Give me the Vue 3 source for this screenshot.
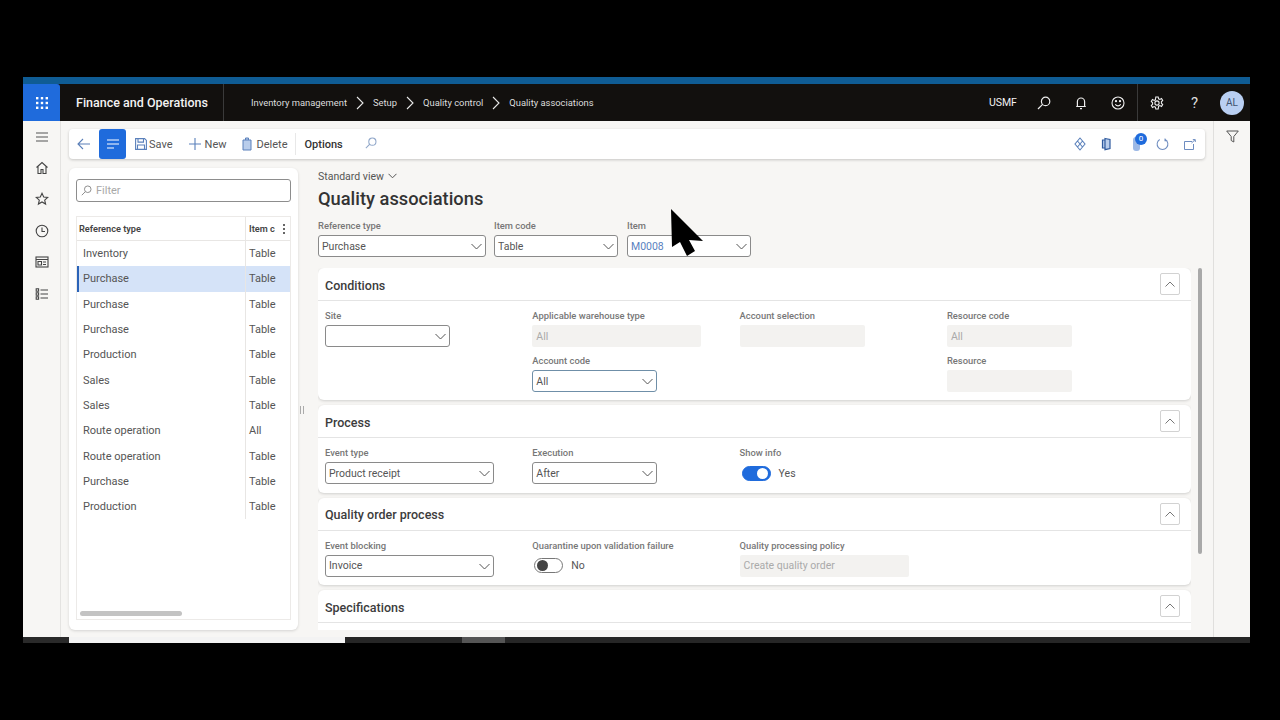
<script setup>
const crumbs = ['Inventory management', 'Setup', 'Quality control', 'Quality associations']

const rows = [
  { type: 'Inventory', code: 'Table' },
  { type: 'Purchase', code: 'Table', selected: true },
  { type: 'Purchase', code: 'Table' },
  { type: 'Purchase', code: 'Table' },
  { type: 'Production', code: 'Table' },
  { type: 'Sales', code: 'Table' },
  { type: 'Sales', code: 'Table' },
  { type: 'Route operation', code: 'All' },
  { type: 'Route operation', code: 'Table' },
  { type: 'Purchase', code: 'Table' },
  { type: 'Production', code: 'Table' }
]
</script>

<template>
  <div class="page">
    <div class="frame">
      <div class="top-strip"></div>

      <header class="navbar">
        <div class="waffle">
          <svg width="14" height="14" viewBox="0 0 14 14" fill="#fff">
            <rect x="1" y="1" width="2.4" height="2.4" /><rect x="5.8" y="1" width="2.4" height="2.4" /><rect x="10.6" y="1" width="2.4" height="2.4" />
            <rect x="1" y="5.8" width="2.4" height="2.4" /><rect x="5.8" y="5.8" width="2.4" height="2.4" /><rect x="10.6" y="5.8" width="2.4" height="2.4" />
            <rect x="1" y="10.6" width="2.4" height="2.4" /><rect x="5.8" y="10.6" width="2.4" height="2.4" /><rect x="10.6" y="10.6" width="2.4" height="2.4" />
          </svg>
        </div>
        <div class="brand">Finance and Operations</div>
        <nav class="crumbs">
          <template v-for="(c, i) in crumbs" :key="c">
            <span>{{ c }}</span>
            <svg v-if="i < crumbs.length - 1" class="crumb-sep" width="8" height="14" viewBox="0 0 8 14" fill="none" stroke="#e8e8e8" stroke-width="1.1">
              <path d="M1 1l6 6-6 6" />
            </svg>
          </template>
        </nav>
        <div class="nav-right">
          <span class="company">USMF</span>
          <svg class="nav-icon" width="14" height="14" viewBox="0 0 14 14" fill="none" stroke="#eee" stroke-width="1.2"><circle cx="8.6" cy="5.4" r="4.2" /><path d="M5.6 8.4L1 13" /></svg>
          <svg class="nav-icon" width="14" height="14" viewBox="0 0 14 14" fill="none" stroke="#eee" stroke-width="1.2"><path d="M3.4 10.5V5.6a3.6 3.6 0 0 1 7.2 0v4.900zM2.2 10.5h9.6M6 12.6h2" /></svg>
          <svg class="nav-icon smile" width="14" height="14" viewBox="0 0 14 14" fill="none" stroke="#eee" stroke-width="1.1"><circle cx="7" cy="7" r="6" /><path d="M4.3 8.2c.7 1.2 1.6 1.7 2.7 1.7s2-.5 2.700-1.700" /><circle cx="5" cy="5.2" r=".6" fill="#eee" /><circle cx="9" cy="5.2" r=".6" fill="#eee" /></svg>
          <span class="nav-divider"></span>
          <svg class="nav-icon gear" width="14" height="14" viewBox="0 0 14 14" fill="none" stroke="#eee" stroke-width="1.1"><path d="M5.8 1h2.4l.4 1.8 1.3.6 1.6-.9 1.2 2-1.3 1.3v1.4l1.3 1.3-1.2 2-1.6-.9-1.3.6L8.2 13H5.8l-.4-1.8-1.3-.6-1.6.9-1.2-2 1.3-1.3V6.800L1.300 5.500l1.200-2 1.600.900 1.300-.600z" /><circle cx="7" cy="7" r="2.1" /></svg>
          <span class="help">?</span>
          <span class="avatar">AL</span>
        </div>
      </header>

      <div class="body">
        <aside class="rail">
          <svg width="14" height="12" viewBox="0 0 14 12" stroke="#555" stroke-width="1.1"><path d="M1 2h12M1 6h12M1 10h12" /></svg>
          <svg width="14" height="14" viewBox="0 0 14 14" fill="none" stroke="#444" stroke-width="1.1"><path d="M1.5 6.5L7 1.5l5.500 5M3 5.500V12.500h3V8.500h2V12.500h3V5.500" /></svg>
          <svg width="14" height="14" viewBox="0 0 14 14" fill="none" stroke="#444" stroke-width="1.1"><path d="M7 1.3l1.700 3.700 4 .4-3 2.700.9 4L7 10l-3.600 2.100.9-4-3-2.700 4-.4z" /></svg>
          <svg width="14" height="14" viewBox="0 0 14 14" fill="none" stroke="#444" stroke-width="1.1"><circle cx="7" cy="7" r="5.8" /><path d="M7 3.5V7.500H10" /></svg>
          <svg width="14" height="14" viewBox="0 0 14 14" fill="none" stroke="#444" stroke-width="1.1"><rect x="1" y="2" width="12" height="10" /><path d="M1 4.500h12M3 6.500h3.500v3.500H3zM8 7h3M8 9.500h3" /></svg>
          <svg width="14" height="14" viewBox="0 0 14 14" fill="none" stroke="#444" stroke-width="1.1"><rect x="1.2" y="1.8" width="2.4" height="2.4" /><rect x="1.2" y="5.8" width="2.4" height="2.4" /><rect x="1.2" y="9.8" width="2.4" height="2.4" /><path d="M5.500 3h7.500M5.500 7h7.500M5.500 11h7.500" /></svg>
        </aside>

        <main class="main">
          <div class="actionbar">
            <svg class="back" width="14" height="12" viewBox="0 0 14 12" fill="none" stroke="#5b7fb8" stroke-width="1.1"><path d="M6 1L1 6l5 5M1 6h12" /></svg>
            <span class="menu-btn">
              <svg width="12" height="10" viewBox="0 0 12 10" stroke="#fff" stroke-width="1.2"><path d="M0 1h12M0 5h12M0 9h7" /></svg>
            </span>
            <span class="action action-first">
              <svg width="12" height="12" viewBox="0 0 12 12" fill="none" stroke="#5a80bb" stroke-width="1.1"><path d="M.6.6h9l1.800 1.800v9H.6zM3 .6v3.500h5.500V.6M2.500 11.400V7h7v4.400" /></svg>
              Save
            </span>
            <span class="action">
              <svg width="12" height="12" viewBox="0 0 12 12" stroke="#5a80bb" stroke-width="1.1"><path d="M6 0v12M0 6h12" /></svg>
              New
            </span>
            <span class="action action-last">
              <svg width="10" height="14" viewBox="0 0 10 14" fill="#b9cdeb" stroke="#5a80bb" stroke-width="1"><path d="M1 3h8v10H1zM3.500 3V1h3v2" /></svg>
              Delete
            </span>
            <span class="options">Options</span>
            <svg class="action-search" width="12" height="12" viewBox="0 0 14 14" fill="none" stroke="#8fa6c9" stroke-width="1.2"><circle cx="8.6" cy="5.4" r="4.2" /><path d="M5.6 8.4L1 13" /></svg>

            <div class="action-right">
              <svg width="12" height="14" viewBox="0 0 12 14" fill="none" stroke="#5a80bb" stroke-width="1.1"><path d="M6 1l5 6-5 6-5-6zM3.500 4l5 6M8.500 4l-5 6" /></svg>
              <svg width="10" height="14" viewBox="0 0 10 14" fill="#b9cdeb" stroke="#2f5a9e" stroke-width="1.2"><path d="M4 1.500l5 1v9l-5 1.200zM4 3H1.500v8H4" /></svg>
              <span class="attach">
                <svg width="8" height="14" viewBox="0 0 8 14" fill="#9db9e6"><rect x="0" y="0" width="7" height="14" rx="3" /></svg>
                <span class="badge">0</span>
              </span>
              <svg width="13" height="14" viewBox="0 0 14 14" fill="none" stroke="#6d8cc0" stroke-width="1.1"><path d="M4 2.200a5.800 5.800 0 1 0 6 0M9.700 1v2.600h2.500" /></svg>
              <svg width="12" height="11" viewBox="0 0 12 11" fill="none" stroke="#6d8cc0" stroke-width="1"><path d="M8 2.500H.5v8h9V5M7.500 4L11 .8M8.800.6H11.300V3" /></svg>
            </div>
          </div>

          <div class="workspace">
            <section class="list-panel">
              <div class="filter">
                <svg width="11" height="11" viewBox="0 0 14 14" fill="none" stroke="#888" stroke-width="1.2"><circle cx="8.6" cy="5.4" r="4.2" /><path d="M5.6 8.4L1 13" /></svg>
                <span>Filter</span>
              </div>
              <div class="grid">
                <div class="grid-head">
                  <span class="col-type">Reference type</span>
                  <span class="col-code">Item c<span class="cut">c</span></span>
                  <span class="kebab">
                    <i></i><i></i><i></i>
                  </span>
                </div>
                <div v-for="(r, i) in rows" :key="i" class="grid-row" :class="{ selected: r.selected }">
                  <span class="col-type">{{ r.type }}</span>
                  <span class="col-code">{{ r.code }}</span>
                </div>
                <div class="grid-scroll"></div>
              </div>
            </section>

            <span class="splitter"></span>

            <section class="form">
              <div class="view-name">
                Standard view
                <svg width="9" height="6" viewBox="0 0 9 6" fill="none" stroke="#555" stroke-width="1"><path d="M.5.8l4 4 4-4" /></svg>
              </div>
              <h1>Quality associations</h1>

              <div class="head-fields">
                <div class="field">
                  <label>Reference type</label>
                  <div class="select w168">Purchase<svg class="chev" width="11" height="7" viewBox="0 0 11 7" fill="none" stroke="#555" stroke-width="1"><path d="M.5 1l5 5 5-5" /></svg></div>
                </div>
                <div class="field">
                  <label>Item code</label>
                  <div class="select w124">Table<svg class="chev" width="11" height="7" viewBox="0 0 11 7" fill="none" stroke="#555" stroke-width="1"><path d="M.5 1l5 5 5-5" /></svg></div>
                </div>
                <div class="field item-field">
                  <label>Item</label>
                  <div class="select w124 link">M0008<svg class="chev" width="11" height="7" viewBox="0 0 11 7" fill="none" stroke="#555" stroke-width="1"><path d="M.5 1l5 5 5-5" /></svg></div>
                </div>
              </div>

              <div class="cards-wrap">
                <div class="cards">
                  <article class="card conditions">
                    <div class="card-head">
                      <h2>Conditions</h2>
                      <span class="collapse"><svg width="10" height="6" viewBox="0 0 10 6" fill="none" stroke="#777" stroke-width="1"><path d="M.5 5.500L5 1l4.500 4.500" /></svg></span>
                    </div>
                    <div class="card-body cond-body">
                      <div class="field">
                        <label>Site</label>
                        <div class="select w125"><svg class="chev" width="11" height="7" viewBox="0 0 11 7" fill="none" stroke="#555" stroke-width="1"><path d="M.5 1l5 5 5-5" /></svg></div>
                      </div>
                      <div class="field-stack">
                        <div class="field">
                          <label>Applicable warehouse type</label>
                          <div class="readonly w169">All</div>
                        </div>
                        <div class="field">
                          <label>Account code</label>
                          <div class="select w125 focused">All<svg class="chev" width="11" height="7" viewBox="0 0 11 7" fill="none" stroke="#555" stroke-width="1"><path d="M.5 1l5 5 5-5" /></svg></div>
                        </div>
                      </div>
                      <div class="field">
                        <label>Account selection</label>
                        <div class="readonly w125"></div>
                      </div>
                      <div class="field-stack">
                        <div class="field">
                          <label>Resource code</label>
                          <div class="readonly w125">All</div>
                        </div>
                        <div class="field">
                          <label>Resource</label>
                          <div class="readonly w125"></div>
                        </div>
                      </div>
                    </div>
                  </article>

                  <article class="card">
                    <div class="card-head">
                      <h2>Process</h2>
                      <span class="collapse"><svg width="10" height="6" viewBox="0 0 10 6" fill="none" stroke="#777" stroke-width="1"><path d="M.5 5.500L5 1l4.500 4.500" /></svg></span>
                    </div>
                    <div class="card-body">
                      <div class="field">
                        <label>Event type</label>
                        <div class="select w169">Product receipt<svg class="chev" width="11" height="7" viewBox="0 0 11 7" fill="none" stroke="#555" stroke-width="1"><path d="M.5 1l5 5 5-5" /></svg></div>
                      </div>
                      <div class="field">
                        <label>Execution</label>
                        <div class="select w125">After<svg class="chev" width="11" height="7" viewBox="0 0 11 7" fill="none" stroke="#555" stroke-width="1"><path d="M.5 1l5 5 5-5" /></svg></div>
                      </div>
                      <div class="field">
                        <label>Show info</label>
                        <div class="toggle-row"><span class="toggle on"><i></i></span>Yes</div>
                      </div>
                    </div>
                  </article>

                  <article class="card">
                    <div class="card-head">
                      <h2>Quality order process</h2>
                      <span class="collapse"><svg width="10" height="6" viewBox="0 0 10 6" fill="none" stroke="#777" stroke-width="1"><path d="M.5 5.500L5 1l4.500 4.500" /></svg></span>
                    </div>
                    <div class="card-body">
                      <div class="field">
                        <label>Event blocking</label>
                        <div class="select w169">Invoice<svg class="chev" width="11" height="7" viewBox="0 0 11 7" fill="none" stroke="#555" stroke-width="1"><path d="M.5 1l5 5 5-5" /></svg></div>
                      </div>
                      <div class="field">
                        <label>Quarantine upon validation failure</label>
                        <div class="toggle-row"><span class="toggle"><i></i></span>No</div>
                      </div>
                      <div class="field">
                        <label>Quality processing policy</label>
                        <div class="readonly w169">Create quality order</div>
                      </div>
                    </div>
                  </article>

                  <article class="card">
                    <div class="card-head">
                      <h2>Specifications</h2>
                      <span class="collapse"><svg width="10" height="6" viewBox="0 0 10 6" fill="none" stroke="#777" stroke-width="1"><path d="M.5 5.500L5 1l4.500 4.500" /></svg></span>
                    </div>
                    <div class="card-body"></div>
                  </article>
                </div>
                <div class="scrollbar"></div>
              </div>
            </section>
          </div>
        </main>

        <aside class="filter-rail">
          <svg width="13" height="13" viewBox="0 0 13 13" fill="none" stroke="#555" stroke-width="1"><path d="M.7 1h11.600L7.800 6.500V12L5.200 10.500V6.500z" /></svg>
        </aside>
      </div>

      <div class="taskbar">
        <span class="task-dark"></span>
        <span class="task-light"></span>
        <span class="task-rest"><i></i></span>
      </div>

      <svg class="cursor" width="34" height="48" viewBox="0 0 34 48"><path d="M1 0L33 32 19 31 25 42 17 47 10 33 2 38z" fill="#000" /></svg>
    </div>
  </div>
</template>

<style scoped>
.page {
  width: 1280px;
  height: 720px;
  background: #000;
  padding: 77px 30px 0 23px;
  box-sizing: border-box;
  overflow: hidden;
  font-family: Roboto, "Liberation Sans", sans-serif;
  color: #333;
}

.frame {
  position: relative;
  height: 566px;
  display: flex;
  flex-direction: column;
  background: #f7f6f4;
}

.top-strip {
  height: 7px;
  background: #0f5c94;
}

.navbar {
  height: 37px;
  display: flex;
  align-items: center;
  background: #12100e;
  color: #f2f2f2;
}

.waffle {
  width: 37px;
  height: 37px;
  background: #1f6bdc;
  display: flex;
  align-items: center;
  justify-content: center;
  border-top-right-radius: 3px;
}

.brand {
  width: 147px;
  height: 37px;
  line-height: 37px;
  padding-left: 16px;
  border-right: 1px solid #3a3a3a;
  font-size: 12.5px;
  font-weight: 500;
  white-space: nowrap;
}

.crumbs {
  display: flex;
  align-items: center;
  gap: 8px;
  margin-left: 27px;
  font-size: 9.4px;
  color: #ddd;
}

.crumb-sep {
  margin: 0 1px;
}

.nav-right {
  margin-left: auto;
  height: 37px;
  display: flex;
  align-items: center;
}

.company {
  font-size: 10.5px;
  margin-right: 20px;
}

.nav-icon {
  margin-right: 23px;
}

.nav-icon.smile {
  margin-right: 12px;
}

.nav-icon.gear {
  margin-right: 28px;
}

.nav-divider {
  width: 1px;
  height: 37px;
  background: #3a3a3a;
  margin-right: 12px;
}

.help {
  font-size: 15px;
  margin-left: -1px;
  margin-right: 22px;
  color: #ddd;
}

.avatar {
  width: 24px;
  height: 24px;
  margin-right: 6px;
  border-radius: 50%;
  background: #b9cff2;
  color: #40526e;
  font-size: 10px;
  text-align: center;
  line-height: 24px;
}

.body {
  flex: 1;
  display: flex;
  min-height: 0;
}

.rail {
  width: 37px;
  margin-right: 8px;
  padding-top: 10px;
  display: flex;
  flex-direction: column;
  align-items: center;
  gap: 17.6px;
  border-right: 1px solid #e4e3e1;
}

.main {
  flex: 1;
  min-width: 0;
  padding: 8px 8px 7px 0;
  display: flex;
  flex-direction: column;
}

.actionbar {
  height: 30px;
  flex: none;
  display: flex;
  align-items: center;
  background: #fff;
  border-radius: 4px;
  box-shadow: 0 1px 3px rgba(0, 0, 0, 0.2);
  font-size: 11px;
  color: #555;
}

.back {
  margin-left: 8px;
}

.menu-btn {
  width: 27px;
  height: 30px;
  margin-left: 8px;
  background: #1f6bdc;
  border-radius: 3px;
  display: flex;
  align-items: center;
  justify-content: center;
}

.action {
  display: flex;
  align-items: center;
  gap: 4px;
  margin-left: 16px;
}

.action-first {
  margin-left: 9px;
  gap: 2px;
}

.action-last {
  padding-right: 8px;
  height: 22px;
  border-right: 1px solid #e8e8e8;
}

.options {
  margin-left: 8px;
  font-weight: 500;
  color: #333;
}

.action-search {
  margin-left: 22px;
  margin-top: -2px;
}

.action-right {
  margin-left: auto;
  display: flex;
  align-items: center;
  gap: 15px;
  padding-right: 9px;
}

.attach {
  position: relative;
  display: flex;
  margin-left: 7px;
}

.badge {
  position: absolute;
  left: 2px;
  top: -4px;
  width: 12px;
  height: 12px;
  border-radius: 50%;
  background: #1f6bdc;
  color: #fff;
  font-size: 8px;
  line-height: 12px;
  text-align: center;
}

.workspace {
  flex: 1;
  min-height: 0;
  display: flex;
  margin-top: 9px;
}

.list-panel {
  width: 229px;
  flex: none;
  box-sizing: border-box;
  padding: 11px 7px 10px 7px;
  background: #fff;
  border-radius: 6px;
  box-shadow: 0 1px 3px rgba(0, 0, 0, 0.14);
  display: flex;
  flex-direction: column;
}

.filter {
  height: 23px;
  flex: none;
  box-sizing: border-box;
  border: 1px solid #8d8d8d;
  border-radius: 3px;
  display: flex;
  align-items: center;
  gap: 4px;
  padding-left: 4px;
  font-size: 11px;
  color: #a8a8a8;
}

.grid {
  position: relative;
  flex: 1;
  margin-top: 14px;
  width: 215px;
  border: 1px solid #eceae8;
  box-sizing: border-box;
}

.grid-head {
  height: 23px;
  display: flex;
  align-items: center;
  position: relative;
  font-size: 9.2px;
  font-weight: 600;
  color: #444;
  border-bottom: 1px solid #e8e6e4;
}

.grid-head .col-type {
  padding-left: 2px;
}

.grid-head .col-code {
  padding-left: 3px;
  flex: none;
  width: 26px;
  overflow: hidden;
  white-space: nowrap;
}

.cut {
  opacity: 0.4;
}

.col-type {
  width: 168px;
  flex: none;
  box-sizing: border-box;
  padding-left: 6px;
}

.col-code {
  flex: 1;
  height: 100%;
  display: flex;
  align-items: center;
  padding-left: 3px;
  border-left: 1px solid #e8e6e4;
}

.kebab {
  position: absolute;
  right: 5px;
  top: 7px;
  display: flex;
  flex-direction: column;
  gap: 2px;
}

.kebab i {
  width: 2px;
  height: 2px;
  border-radius: 50%;
  background: #333;
}

.grid-row {
  height: 25.3px;
  display: flex;
  align-items: center;
  font-size: 11px;
  color: #555;
}

.grid-row.selected {
  background: #d5e3f8;
  box-shadow: inset 2px 0 0 #2a63b8;
}

.grid-scroll {
  position: absolute;
  left: 3px;
  bottom: 3px;
  width: 102px;
  height: 5px;
  border-radius: 3px;
  background: #c3c3c3;
}

.splitter {
  width: 20px;
  flex: none;
  position: relative;
}

.splitter::after {
  content: "";
  position: absolute;
  left: 2px;
  top: 238px;
  width: 2px;
  height: 8px;
  border-left: 1px solid #aaa;
  border-right: 1px solid #aaa;
}

.form {
  flex: 1;
  min-width: 0;
  display: flex;
  flex-direction: column;
}

.view-name {
  font-size: 10.5px;
  color: #555;
  display: flex;
  align-items: center;
  gap: 4px;
  height: 16px;
}

.form h1 {
  margin: 2px 0 0;
  font-size: 18.3px;
  line-height: 26px;
  font-weight: 500;
  color: #333;
}

.head-fields {
  display: flex;
  gap: 8px;
  margin-top: 8px;
}

.item-field {
  margin-left: 1px;
}

.field label {
  display: block;
  font-size: 9.4px;
  line-height: 12px;
  margin-bottom: 3px;
  font-weight: 500;
  color: #777;
  white-space: nowrap;
}

.field-stack {
  display: flex;
  flex-direction: column;
  gap: 8px;
}

.select,
.readonly {
  position: relative;
  height: 22px;
  box-sizing: border-box;
  display: flex;
  align-items: center;
  font-size: 10.5px;
  color: #555;
  padding-left: 3px;
}

.select {
  background: #fff;
  border: 1px solid #8a8a8a;
  border-radius: 3px;
}

.select.focused {
  border-color: #6f8fa8;
}

.select.link {
  color: #5a7fc0;
}

.readonly {
  background: #f3f2f0;
  color: #aaa;
  border-radius: 2px;
  padding-left: 4px;
}

.chev {
  position: absolute;
  right: 3px;
  top: 7px;
}

.w124 { width: 124px; }
.w125 { width: 125px; }
.w168 { width: 168px; }
.w169 { width: 169px; }

.cards-wrap {
  flex: 1;
  min-height: 0;
  display: flex;
  margin-top: 11px;
}

.cards {
  flex: 1;
  min-width: 0;
  overflow: hidden;
  display: flex;
  flex-direction: column;
  gap: 5px;
}

.card {
  flex: none;
  background: #fff;
  border-radius: 6px;
  box-shadow: 0 1px 3px rgba(0, 0, 0, 0.16);
}

.card-head {
  height: 33px;
  display: flex;
  align-items: center;
  justify-content: space-between;
  box-sizing: border-box;
  padding: 0 11px 0 7px;
  border-bottom: 1px solid #e4e4e4;
}

.card h2 {
  margin: 2px 0 0;
  font-size: 12.5px;
  font-weight: 500;
  color: #3c3c3c;
}

.collapse {
  width: 20px;
  height: 22px;
  box-sizing: border-box;
  border: 1px solid #d2d2d2;
  border-radius: 2px;
  display: flex;
  align-items: center;
  justify-content: center;
}

.card-body {
  display: grid;
  grid-template-columns: repeat(4, 207.3px);
  padding: 9px 0 0 7px;
  height: 54.5px;
  box-sizing: border-box;
}

.cond-body {
  height: 99px;
}

.toggle-row {
  height: 22px;
  display: flex;
  align-items: center;
  gap: 8px;
  font-size: 10.5px;
  color: #555;
}

.toggle {
  width: 29px;
  height: 15px;
  box-sizing: border-box;
  margin-left: 2px;
  border: 1px solid #777;
  border-radius: 8px;
  display: flex;
  align-items: center;
  padding: 0 2px;
  background: #fff;
}

.toggle i {
  width: 11px;
  height: 11px;
  border-radius: 50%;
  background: #444;
}

.toggle.on {
  background: #1f6bdc;
  border-color: #1f6bdc;
  justify-content: flex-end;
}

.toggle.on i {
  background: #fff;
}

.scrollbar {
  flex: none;
  width: 4px;
  height: 286px;
  margin: 0 3px 0 7px;
  border-radius: 2px;
  background: #a9a9a9;
}

.filter-rail {
  width: 36px;
  border-left: 1px solid #e0dfdd;
  display: flex;
  justify-content: center;
  padding-top: 9px;
}

.taskbar {
  height: 6px;
  flex: none;
  display: flex;
}

.taskbar span {
  display: block;
  height: 100%;
}

.task-dark {
  width: 46px;
  background: #2a2a2a;
}

.task-light {
  width: 276px;
  background: #f3f3f3;
}

.task-rest {
  flex: 1;
  background: #262626;
  position: relative;
}

.task-rest i {
  position: absolute;
  left: 117px;
  top: 0;
  width: 43px;
  height: 6px;
  background: #555;
}

.cursor {
  position: absolute;
  left: 647px;
  top: 132px;
}
</style>

<style>
html,
body {
  margin: 0;
  background: #000;
}
</style>
